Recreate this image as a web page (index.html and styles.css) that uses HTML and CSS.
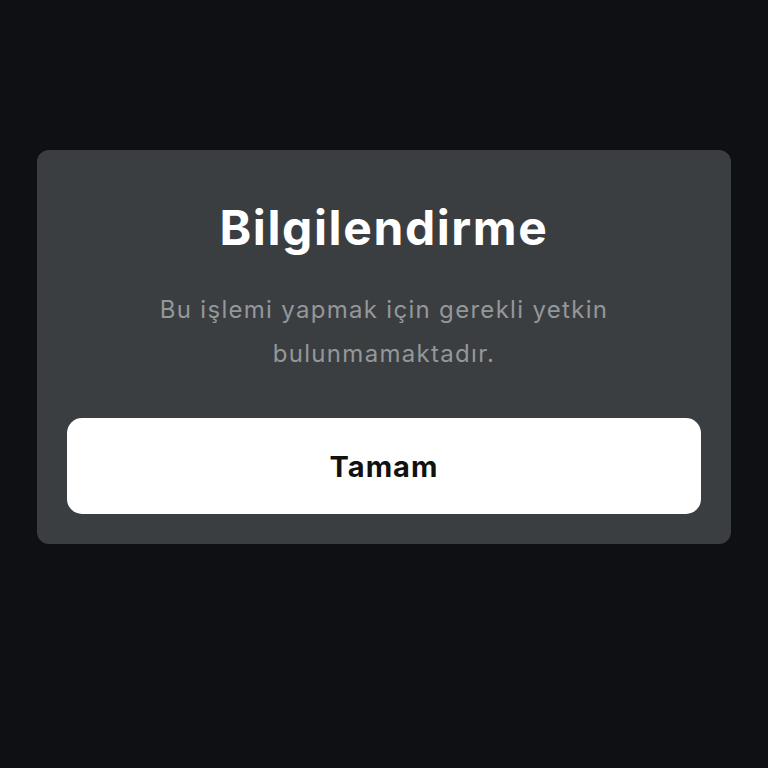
FILE: index.html
```html
<!DOCTYPE html>
<html lang="tr">
<head>
    <meta charset="UTF-8">
    <meta name="viewport" content="width=device-width, initial-scale=1.0">
    <title>Bilgilendirme</title>
    <link rel="stylesheet" href="styles.css">
</head>
<body>
    <div class="overlay">
        <div class="dialog">
            <h1 class="dialog-title">Bilgilendirme</h1>
            <p class="dialog-text">Bu işlemi yapmak için gerekli yetkin bulunmamaktadır.</p>
            <button class="dialog-button">Tamam</button>
        </div>
    </div>
</body>
</html>
```

FILE: styles.css
```css
body, html {
    margin: 0;
    padding: 0;
    width: 100%;
    height: 100%;
    background-color: #0e1013;
    font-family: Inter, "Noto Sans", sans-serif;
}

.overlay {
    padding: 150px 37px 0;
}

.dialog {
    background-color: #3a3e41;
    border-radius: 12px;
    padding: 44px 30px 30px;
    text-align: center;
}

.dialog-title {
    margin: 0;
    font-size: 48px;
    font-weight: 700;
    line-height: 68px;
    color: #ffffff;
    letter-spacing: 1.6px;
}

.dialog-text {
    margin: 26px auto 42px;
    max-width: 500px;
    font-size: 24px;
    line-height: 44px;
    color: #94979a;
    letter-spacing: 1.3px;
}

.dialog-button {
    display: block;
    width: 100%;
    height: 96px;
    border: none;
    border-radius: 15px;
    background-color: #ffffff;
    color: #111111;
    font-family: inherit;
    font-size: 29px;
    font-weight: 700;
    letter-spacing: 1px;
    cursor: pointer;
}
```
